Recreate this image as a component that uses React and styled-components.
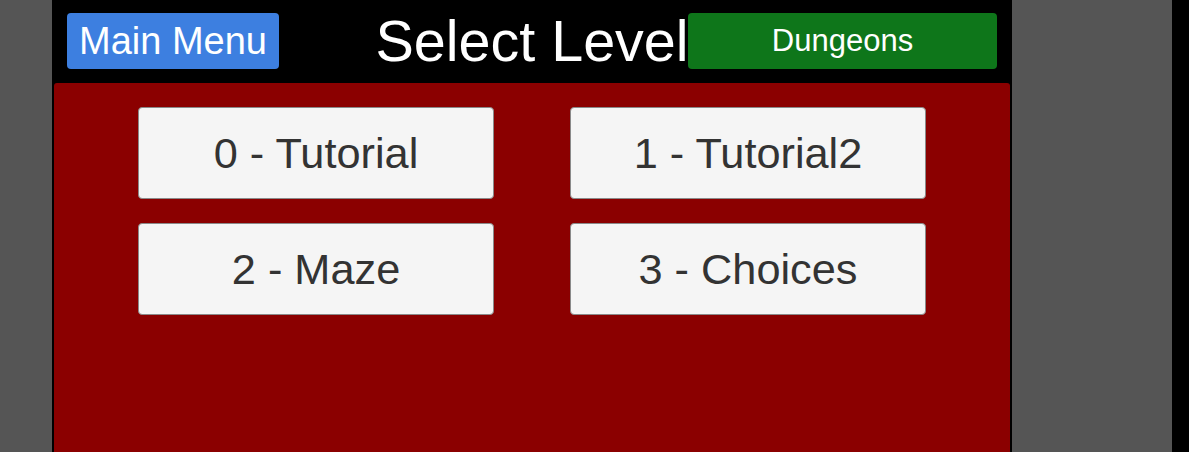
import React from "react";
import styled, { createGlobalStyle } from "styled-components";

const Global = createGlobalStyle`
  html, body { margin: 0; padding: 0; background: #555555; }
  body { font-family: "Liberation Sans", Arial, sans-serif; overflow: hidden; }
`;

const Page = styled.div`
  display: flex;
  height: 452px;
  background: #555555;
`;

const Gutter = styled.div`
  width: ${(p) => p.$w}px;
  flex: none;
  background: ${(p) => p.$bg || "#555555"};
`;

const Panel = styled.div`
  width: 960px;
  flex: none;
  background: #000;
  display: flex;
  flex-direction: column;
`;

const Header = styled.header`
  display: grid;
  grid-template-columns: 1fr;
  grid-template-rows: 56px;
  padding: 13px 15px 14px;
  align-items: center;
`;

const HeaderButton = styled.button`
  grid-area: 1 / 1;
  justify-self: ${(p) => p.$side};
  width: ${(p) => p.$w}px;
  height: 56px;
  border: none;
  border-radius: 4px;
  background: ${(p) => p.$bg};
  color: #fff;
  font-family: "Liberation Sans", Arial, sans-serif;
  font-size: ${(p) => p.$fs}px;
  padding: 0;
  margin: 0;
  z-index: 1;
  cursor: pointer;
`;

const Title = styled.h1`
  grid-area: 1 / 1;
  justify-self: center;
  margin: 0;
  font-weight: normal;
  font-size: 57.5px;
  line-height: 56px;
  color: #fff;
  white-space: nowrap;
`;

const Board = styled.main`
  flex: 1;
  margin: 0 2px;
  background: #8b0000;
  border-radius: 3px 3px 0 0;
  padding-top: 24px;
  display: grid;
  grid-template-columns: repeat(2, 356px);
  grid-auto-rows: 92px;
  column-gap: 76px;
  row-gap: 24px;
  justify-content: center;
  align-content: start;
`;

const LevelButton = styled.button`
  background: #f5f5f5;
  border: 1px solid #8a8a8a;
  border-radius: 4px;
  color: #333333;
  font-family: "Liberation Sans", Arial, sans-serif;
  font-size: 43.3px;
  padding: 0;
  margin: 0;
  cursor: pointer;
`;

const levels = ["0 - Tutorial", "1 - Tutorial2", "2 - Maze", "3 - Choices"];

export default function App() {
  return (
    <>
      <Global />
      <Page>
        <Gutter $w={52} />
        <Panel>
          <Header>
            <HeaderButton $side="start" $w={212} $bg="#3d7fe0" $fs={38}>
              Main Menu
            </HeaderButton>
            <Title>Select Level</Title>
            <HeaderButton $side="end" $w={309} $bg="#0e761a" $fs={31}>
              Dungeons
            </HeaderButton>
          </Header>
          <Board>
            {levels.map((l) => (
              <LevelButton key={l}>{l}</LevelButton>
            ))}
          </Board>
        </Panel>
        <Gutter $w={160} />
        <Gutter $w={17} $bg="#000" />
      </Page>
    </>
  );
}
